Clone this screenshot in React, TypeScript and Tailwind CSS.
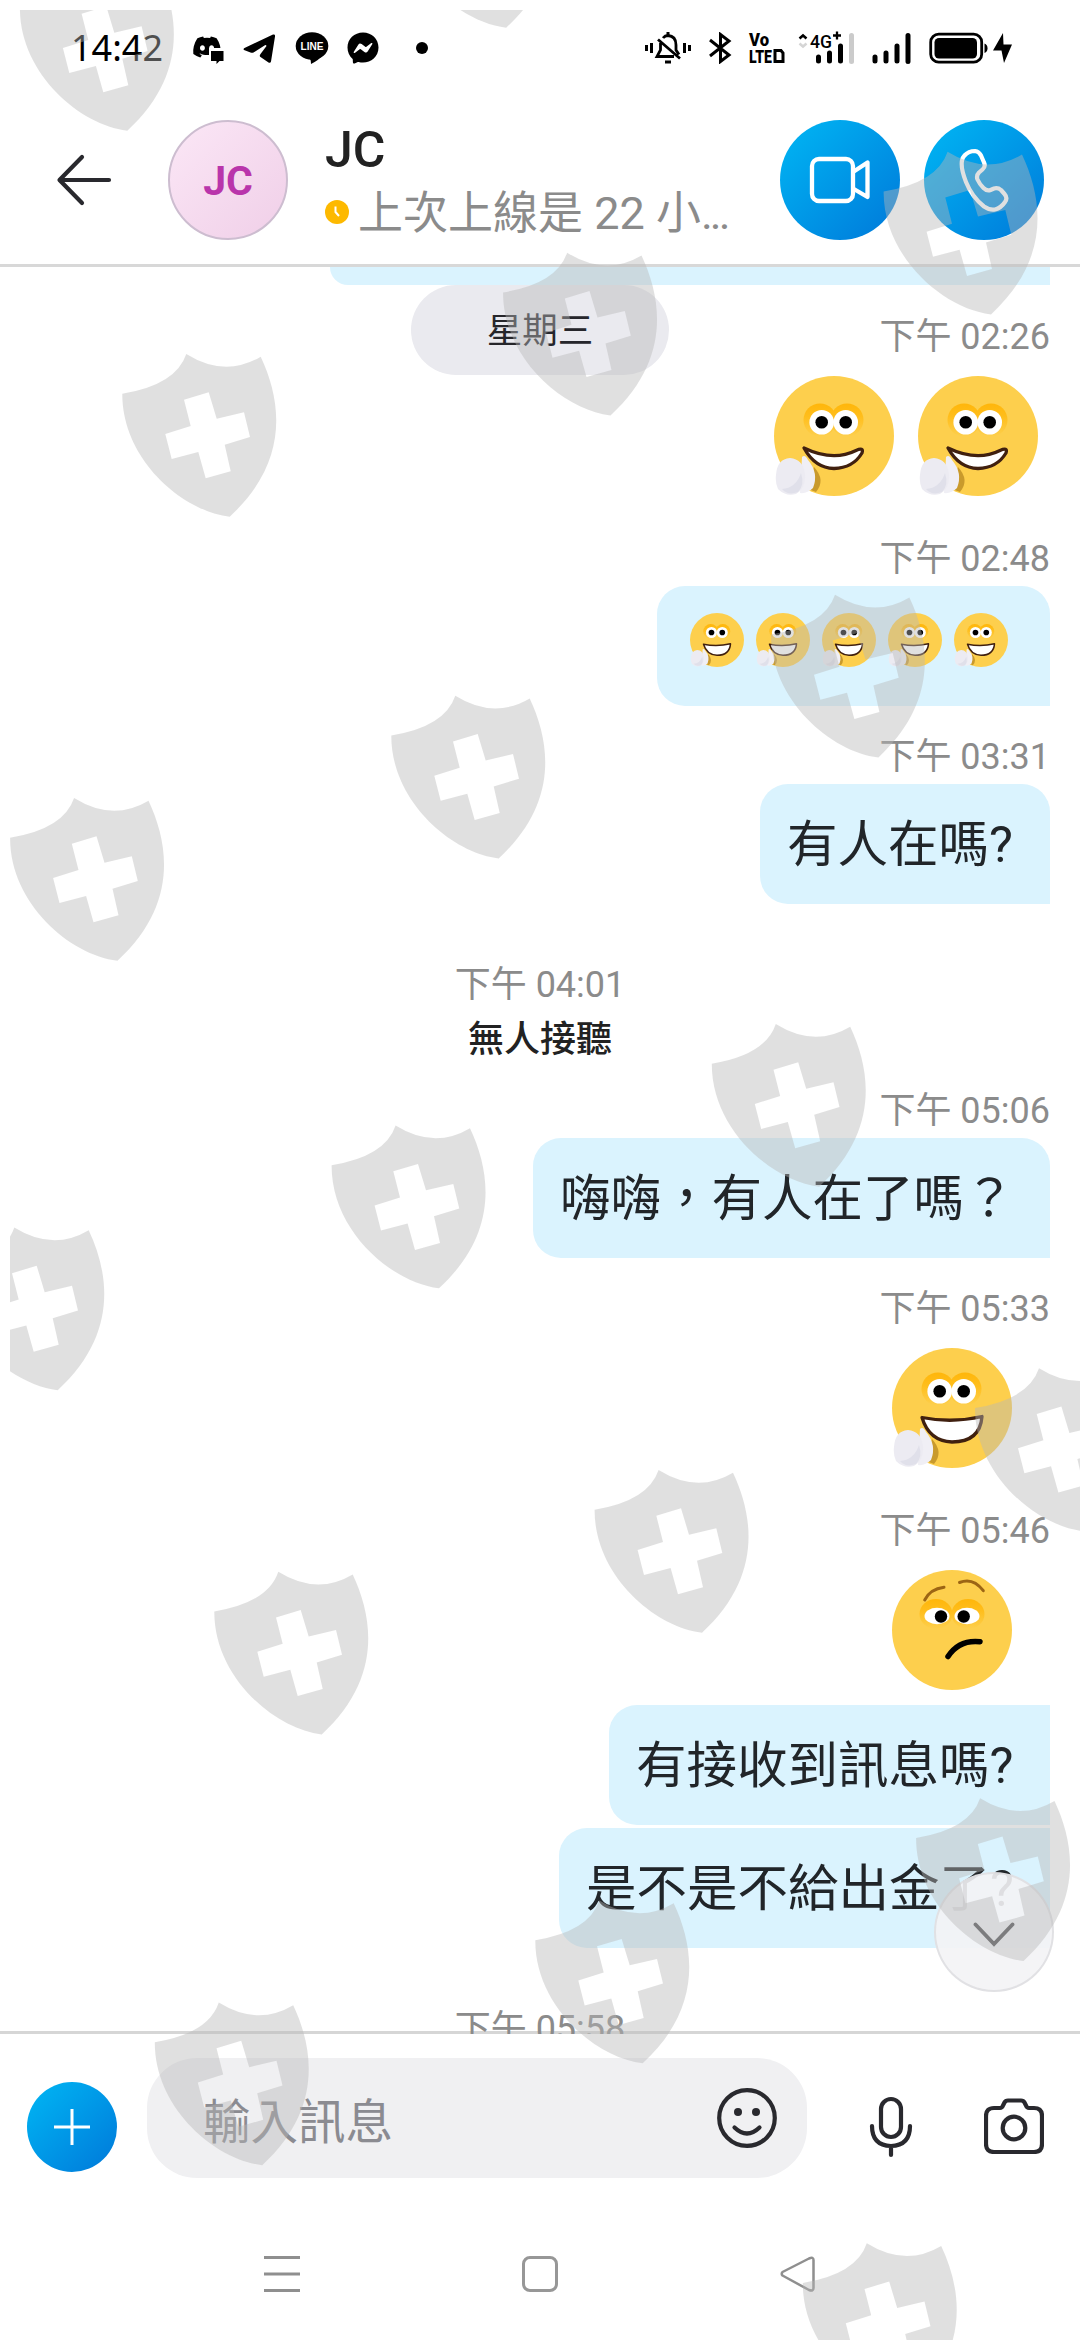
import { FaDiscord, FaFacebookMessenger } from "react-icons/fa";

type MessageItem =
  | { kind: "time"; text: string; center?: boolean; className: string }
  | { kind: "text"; text: string; className: string }
  | { kind: "call"; text: string; className: string }
  | { kind: "small"; count: number; className: string }
  | { kind: "emoji"; faces: FaceType[]; className: string };

type FaceType = "hi" | "grin" | "unsure";

const messages: MessageItem[] = [
  { kind: "time", text: "下午 02:26", className: "mt-[31px]" },
  { kind: "emoji", faces: ["grin", "grin"], className: "mt-[18px] pr-3" },
  { kind: "time", text: "下午 02:48", className: "mt-[42px]" },
  { kind: "small", count: 5, className: "mt-1.5 w-[393px] rounded-t-[28px] rounded-bl-[28px]" },
  { kind: "time", text: "下午 03:31", className: "mt-[30px]" },
  { kind: "text", text: "有人在嗎?", className: "mt-1.5 w-[290px] rounded-t-[28px] rounded-bl-[28px]" },
  { kind: "time", text: "下午 04:01", center: true, className: "mt-[60px]" },
  { kind: "call", text: "無人接聽", className: "mt-[13px]" },
  { kind: "time", text: "下午 05:06", className: "mt-[29px]" },
  { kind: "text", text: "嗨嗨，有人在了嗎？", className: "mt-1.5 w-[517px] rounded-t-[28px] rounded-bl-[28px]" },
  { kind: "time", text: "下午 05:33", className: "mt-[30px]" },
  { kind: "emoji", faces: ["hi"], className: "mt-[18px] pr-[38px]" },
  { kind: "time", text: "下午 05:46", className: "mt-[42px]" },
  { kind: "emoji", faces: ["unsure"], className: "mt-[18px] pr-[38px]" },
  { kind: "text", text: "有接收到訊息嗎?", className: "mt-[15px] w-[441px] rounded-l-[28px]" },
  { kind: "text", text: "是不是不給出金了?", className: "mt-[3px] w-[491px] rounded-l-[28px]" },
  { kind: "time", text: "下午 05:58", center: true, className: "mt-[60px]" },
];

// top left corner of every shield in the overlay
const shields = [
  [19.6, -32], [398.5, -135],
  [883.3, 151.7], [502.8, 252.7], [122, 354],
  [770.7, 594.7], [391, 695.7], [9.8, 798],
  [711.5, 1024], [331.3, 1125.6], [-50, 1227.5],
  [974.7, 1368.3], [594.3, 1470], [214, 1571.7],
  [915.8, 1798.3], [535, 1900.6], [154.5, 2002.5],
  [802.5, 2243.3],
];

const Watermark = () => (
  <svg className="absolute inset-0 pointer-events-none" width="1080" height="2340" viewBox="0 0 1080 2340">
    <defs>
      <clipPath id="safe">
        <rect x="10" y="10" width="1070" height="2330" />
      </clipPath>
      <path
        id="shield"
        fillRule="evenodd"
        d="M.3 39.7Q54 31 64.3 0Q103 24 138.7 2.7C161 50 166 109 107.7 162.7C60 157 0 105 .3 39.7ZM62 45.7L86.7 38.3 94.7 64.7 122 58.3 128 83 102.7 90.7 108.7 117.3 83.7 124.3 76.3 98 49.7 105 43.3 80 68.7 72Z"
      />
    </defs>
    <g clipPath="url(#safe)" fill="#b7b7b7" fillOpacity=".43">
      {shields.map(([x, y]) => (
        <use key={`${x}-${y}`} href="#shield" x={x} y={y} />
      ))}
    </g>
  </svg>
);

const Face = ({ type, size = 120 }: { type: FaceType; size?: number }) => (
  <svg width={size} height={size} viewBox="0 0 120 120">
    <defs>
      <linearGradient id="lid" x1="0" y1="0" x2="0" y2="1">
        <stop offset="0" stopColor="#ffb60a" />
        <stop offset=".4" stopColor="#ffbe1c" />
        <stop offset="1" stopColor="#fdcf4d" />
      </linearGradient>
    </defs>
    <circle cx="60" cy="60" r="60" fill="#fdcf4d" />
    {type === "unsure" ? (
      <>
        <ellipse cx="44" cy="44" rx="16.500" ry="15" fill="url(#lid)" />
        <ellipse cx="76" cy="44" rx="16.500" ry="15" fill="url(#lid)" />
        <ellipse cx="45" cy="46" rx="12.500" ry="8.200" fill="#fff" />
        <ellipse cx="75" cy="46" rx="12.500" ry="8.200" fill="#fff" />
        <circle cx="49" cy="46.500" r="6.200" />
        <circle cx="71.700" cy="46.500" r="6.200" />
        <g fill="none" strokeLinecap="round">
          <path d="M32.700 30Q38 19 52 17.200M67.500 12.500Q81 7 91.300 20.700" stroke="#9c6514" strokeWidth="3" />
          <path d="M56 86.500Q67 69.500 88 71.700" stroke="#000" strokeWidth="5.500" />
        </g>
      </>
    ) : (
      <g>
        <g transform={type === "grin" ? "translate(0 3)" : undefined}>
          <circle cx="46" cy="41" r="16.500" fill="url(#lid)" />
          <circle cx="73" cy="41" r="16.500" fill="url(#lid)" />
          <circle cx="47.700" cy="43.300" r="12.300" fill="#fff" />
          <circle cx="71.700" cy="43.300" r="12.300" fill="#fff" />
          <circle cx="47.700" cy="43.300" r="6.300" />
          <circle cx="71.700" cy="43.300" r="6.300" />
        </g>
        {type === "grin" ? (
          <path
            d="M30 72Q59 86 82 74.500Q90 71 88 77Q79 92 60 92.500Q41 92 30 72Z"
            fill="#fff" stroke="#40200f" strokeWidth="3.300" strokeLinejoin="round"
          />
        ) : (
          <path
            d="M30 69.500Q60 75.500 90 68.500Q88 94 60 94Q37 93 30 69.500Z"
            fill="#fff" stroke="#40200f" strokeWidth="3.300" strokeLinejoin="round"
          />
        )}
        {/* waving hand */}
        <path d="M40 91Q52 104 42 116L34 113Z" fill="#c99a2c" />
        <path d="M28 81Q31 78 34 84Q45 97 39 112Q33 118 26 117Z" fill="#f0eff5" />
        <path d="M2 99Q3 83 16 82Q29 83 31 98Q32 112 22 118Q12 121 4 113Q1 106 2 99Z" fill="#ecebf2" />
        <path d="M27 97Q22 112 8 113Q14 120 24 116Q31 109 27 97Z" fill="#e0e0ea" />
      </g>
    )}
  </svg>
);

const Message = ({ item }: { item: MessageItem }) => {
  if (item.kind === "time") {
    return (
      <div className={`h-[42px] shrink-0 text-[36px] leading-[42px] text-[#8b8b8b] whitespace-nowrap ${item.center ? "self-center" : "self-end"} ${item.className}`}>
        {item.text}
      </div>
    );
  }
  if (item.kind === "call") {
    return (
      <div className={`h-[42px] shrink-0 self-center text-[36px] leading-[42px] font-medium text-[#222] ${item.className}`}>
        {item.text}
      </div>
    );
  }
  if (item.kind === "emoji") {
    return (
      <div className={`flex shrink-0 self-end gap-6 ${item.className}`}>
        {item.faces.map((face, i) => (
          <Face key={i} type={face} />
        ))}
      </div>
    );
  }
  if (item.kind === "small") {
    return (
      <div className={`flex h-[120px] shrink-0 gap-3 self-end bg-[#daf3fe] pl-[33px] pt-[27px] ${item.className}`}>
        {Array.from({ length: item.count }, (_, i) => (
          <Face key={i} type="hi" size={54} />
        ))}
      </div>
    );
  }
  return (
    <div className={`h-[120px] shrink-0 self-end bg-[#daf3fe] pl-[27px] pt-[31px] text-[50.5px] leading-[60px] text-[#212529] whitespace-nowrap ${item.className}`}>
      {item.text}
    </div>
  );
};

const StatusBar = () => (
  <div className="flex h-24 items-center pl-[71px] pr-[67px] text-black">
    <div className="w-[121px] font-['Noto_Sans'] text-[36px] leading-[48px]">14:42</div>
    {/* discord with a small bubble in front */}
    <div className="relative h-8 w-8">
      <FaDiscord className="h-[30px] w-[30px]" />
      <svg className="absolute left-0 top-0" width="32" height="32" viewBox="0 0 32 32">
        <path d="M17 16h15v16H17z" fill="#fff" />
        <path d="M19 19h12.500v10h-4l-3 3v-3H19z" />
      </svg>
    </div>
    <svg className="ml-[19px]" width="33" height="34" viewBox="0 0 33 34">
      <path d="M1 19Q0 18 1.500 17L30 3.500Q32.500 3 32 5.500L28 30.500Q27.500 32.500 25.500 31.500L17.500 26Q16 25 17.500 23L23.500 15Q23 13.500 21.500 14.500L10.500 21.500Q9 22 7.500 21.500Z" />
    </svg>
    <svg className="ml-[19px]" width="34" height="34" viewBox="0 0 34 34">
      <ellipse cx="17" cy="15" rx="16.300" ry="13.800" />
      <path d="M8 26L28 24Q24 29 16 33Q16 29 15 28Z" />
      <text x="5.500" y="19" fontFamily="Liberation Sans" fontWeight="700" fontSize="11.500" textLength="23" lengthAdjust="spacingAndGlyphs" fill="#fff">LINE</text>
    </svg>
    <FaFacebookMessenger className="ml-[18px] h-8 w-8" />
    <div className="ml-[37px] h-3 w-3 rounded-full bg-black" />

    <svg className="ml-auto" width="46" height="32" viewBox="0 0 46 32" fill="none" stroke="#000" strokeWidth="3">
      <path d="M1.500 13v6M6.500 11v10M39.500 11v10M44.500 13v6" />
      <path d="M13 7.500L35 26.500M18 6Q20 3.500 23 3.500Q31 4 31 13V18L34 22.500M15.500 11V18L12 24.500H29" strokeWidth="2.800" />
      <path d="M23 0v4M20 30h6" strokeWidth="3" />
    </svg>
    <svg className="ml-[18px]" width="23" height="32" viewBox="0 0 23 32" fill="none" stroke="#000" strokeWidth="3">
      <path d="M1 8L20 23L11.500 29.500V2.500L20 9L1 24" />
    </svg>
    <svg className="ml-[17px] overflow-visible" width="36" height="32" viewBox="0 0 36 32" fontFamily="Roboto" fontWeight="900">
      <text x="0" y="14" fontSize="17.500" textLength="20" lengthAdjust="spacingAndGlyphs">Vo</text>
      <text x="0" y="31" fontSize="19" textLength="23" lengthAdjust="spacingAndGlyphs">LTE</text>
      <path d="M26 18.500H32L34 21V29.500H26Z" fill="none" stroke="#000" strokeWidth="3" />
    </svg>
    <svg className="ml-[13px] overflow-visible" width="58" height="32" viewBox="0 0 58 32">
      <path d="M1.500 6.500L5 3.500L8.500 6.500" fill="none" stroke="#000" strokeWidth="2.500" />
      <path d="M1.500 11.500L5 14.500L8.500 11.500" fill="none" stroke="#d5d5d5" strokeWidth="2.500" />
      <text x="12" y="15.500" fontFamily="Roboto" fontWeight="500" fontSize="18.500" textLength="22" lengthAdjust="spacingAndGlyphs">4G</text>
      <path d="M35 3.500h8M39 -.5v8" stroke="#000" strokeWidth="2.300" />
      <g strokeWidth="5" strokeLinecap="round" stroke="#000">
        <path d="M20.500 25v4M31.500 21v8M42.500 14v15" />
        <path d="M53.500 3.500v26" stroke="#cbcbcb" />
      </g>
    </svg>
    <svg className="ml-[16px]" width="40" height="32" viewBox="0 0 40 32" stroke="#000" strokeWidth="5" strokeLinecap="round">
      <path d="M3 25v4M14 21v8M25 14v15M36 3.500v26" />
    </svg>
    <svg className="ml-[17px]" width="84" height="32" viewBox="0 0 84 32">
      <rect x="1.700" y="2.200" width="51" height="28" rx="8" fill="none" stroke="#000" strokeWidth="2.800" />
      <rect x="5.500" y="6" width="42.500" height="20.500" rx="4.500" />
      <path d="M55.500 11.500q3 1 3 4.700t-3 4.700z" />
      <path d="M74 1L64 18.500h8.500L75 31L83 12.500h-8.500Z" />
    </svg>
  </div>
);

const Header = () => (
  <div className="flex h-[171px] items-start border-b-[3px] border-[#d8d8d8] pl-14 pr-9 pt-6">
    <svg className="mt-[34px]" width="56" height="52" viewBox="0 0 56 52" fill="none" stroke="#29292e" strokeWidth="4.200" strokeLinecap="round" strokeLinejoin="round">
      <path d="M53 26H4M26 3L3.500 26L26 49" />
    </svg>
    <div className="ml-14 flex h-[120px] w-[120px] items-center justify-center rounded-full border-2 border-[#cdbdd0] bg-gradient-to-br from-[#fbe7f6] to-[#f0cfe8] pt-[3px] text-[41px] font-bold text-[#b935ab]">
      JC
    </div>
    <div className="ml-[37px] flex w-[420px] flex-col">
      <div className="h-[62px] text-[50px] leading-[60px] font-medium text-[#222]">JC</div>
      <div className="flex h-[60px] items-center whitespace-nowrap">
        <svg width="24" height="24" viewBox="0 0 24 24" fill="none">
          <circle cx="12" cy="12" r="12" fill="#fdb900" />
          <path d="M10.500 6.500V12L14 16" stroke="#fff" strokeWidth="2" />
        </svg>
        <span className="ml-[9px] pt-1 text-[45px] leading-[56px] text-[#8b8b8b]">
          上次上線是 22 小<span className="tracking-[-3px]">...</span>
        </span>
      </div>
    </div>
    <div className="ml-auto flex gap-6">
      <div className="flex h-[120px] w-[120px] items-center justify-center rounded-full bg-gradient-to-br from-[#00b7f4] to-[#0078d9]">
        <svg width="62" height="50" viewBox="0 0 62 50" fill="none" stroke="#fff" strokeWidth="4.300" strokeLinejoin="round">
          <rect x="3" y="4" width="41" height="42" rx="7" />
          <path d="M44 17L58.500 7.500V42L44 33.500" />
        </svg>
      </div>
      <div className="flex h-[120px] w-[120px] items-center justify-center rounded-full bg-gradient-to-br from-[#00b7f4] to-[#0078d9]">
        <svg width="50" height="64" viewBox="0 0 50 64" fill="none" stroke="#fff" strokeWidth="4.200" strokeLinejoin="round">
          <path d="M5.500 7.500Q9.500 3 16 3Q20 3.500 22 7.500L25 14.500Q27 18.500 23.500 21.500L20 24.500Q17 27.500 18.500 31.500Q20.500 36 24.500 40Q28 43.500 31.500 42L35 40.500Q39 39.500 42 42L45.500 46Q49 50 46 54Q42 60 36 61.500Q31 62.500 25 58.500Q13 49 7 34Q1.500 20 3 12.500Q3.500 9.500 5.500 7.500Z" />
        </svg>
      </div>
    </div>
  </div>
);

const Composer = () => (
  <div className="flex h-[162px] items-start pl-[27px] pr-9 pt-6">
    <div className="mt-6 flex h-[90px] w-[90px] items-center justify-center rounded-full bg-gradient-to-br from-[#00b7f4] to-[#0078d9]">
      <svg width="36" height="36" viewBox="0 0 36 36" stroke="#fff" strokeWidth="3">
        <path d="M18 0v36M0 18h36" />
      </svg>
    </div>
    <div className="ml-[30px] flex h-[120px] w-[660px] items-center justify-between rounded-[50px] bg-[#f0f0f2] pl-14 pr-[30px]">
      <span className="pt-[9px] text-[47.5px] leading-[56px] text-[#8b8b91]">輸入訊息</span>
      <svg width="60" height="60" viewBox="0 0 60 60" fill="none" stroke="#29292e" strokeWidth="4.200" strokeLinecap="round">
        <circle cx="30" cy="30" r="27.800" />
        <path d="M17.500 39.500Q30 51.500 42.500 39.500" />
        <circle cx="21" cy="24" r="4" fill="#29292e" stroke="none" />
        <circle cx="39" cy="24" r="4" fill="#29292e" stroke="none" />
      </svg>
    </div>
    <svg className="ml-[62px] mt-[38px]" width="44" height="62" viewBox="0 0 44 62" fill="none" stroke="#29292e" strokeWidth="4.200" strokeLinecap="round">
      <rect x="12" y="3" width="20" height="38" rx="10" />
      <path d="M3 30Q3 49.500 22 50Q41 49.500 41 30M22 50v9" />
    </svg>
    <svg className="ml-auto mt-[40px]" width="60" height="56" viewBox="0 0 60 56" fill="none" stroke="#29292e" strokeWidth="4.200" strokeLinejoin="round">
      <path d="M10 10H16Q18 10 19 7.500L20.500 4.500Q21.500 2.500 24 2.500H37Q39.500 2.500 40.500 4.500L42 7.500Q43 10 45 10H50Q58 10 58 18V46Q58 54 50 54H10Q2 54 2 46V18Q2 10 10 10Z" />
      <circle cx="30" cy="30" r="11.300" />
    </svg>
  </div>
);

const NavBar = () => (
  <div className="flex flex-1 items-start pl-[264px] pt-[60px]">
    <svg width="36" height="36" viewBox="0 0 36 36" stroke="#8f8f8f" strokeWidth="3">
      <path d="M0 1.500h36M0 18h36M0 34.500h36" />
    </svg>
    <div className="ml-[222px] h-9 w-9 rounded-[8px] border-[3px] border-[#979797]" />
    <svg className="ml-[222px]" width="36" height="36" viewBox="0 0 36 36" fill="none" stroke="#8f8f8f" strokeWidth="2.500" strokeLinejoin="round">
      <path d="M2.500 16Q1 18 2.500 19.500L29 34Q33.500 35.500 33.500 32V4Q33.500 .5 29 2.500Z" />
    </svg>
  </div>
);

const App = () => {
  return (
    <div className="relative flex h-[2340px] w-[1080px] flex-col overflow-hidden bg-white font-[Roboto,'Noto_Sans_CJK_TC',sans-serif]">
      <StatusBar />
      <Header />

      <div className="relative h-[1767px] shrink-0 overflow-hidden shadow-[inset_0_-3px_0_#d6d6d6]">
        <div className="flex flex-col px-[30px]">
          <div className="h-[18px] w-[720px] shrink-0 self-end rounded-bl-[28px] bg-[#daf3fe]" />
          {messages.map((item, i) => (
            <Message key={i} item={item} />
          ))}
        </div>

        {/* floating day label */}
        <div className="absolute left-[411px] top-[18px] flex h-[90px] w-[258px] items-center justify-center rounded-[45px] bg-[#eaeaef] pt-[3px] text-[35.5px] text-[#26262b]">
          星期三
        </div>

        {/* scroll to bottom */}
        <div className="absolute left-[934px] top-[1605px] flex h-[120px] w-[120px] items-center justify-center rounded-full border-2 border-[#dcdce0]/80 bg-[#f3f3f5]/90">
          <svg className="mt-1" width="42" height="25" viewBox="0 0 42 25" fill="none" stroke="#505054" strokeWidth="3.800" strokeLinecap="round">
            <path d="M2.500 2.500L21 22L39.500 2.500" />
          </svg>
        </div>
      </div>

      <Composer />
      <NavBar />
      <Watermark />
    </div>
  );
};

export default App;
